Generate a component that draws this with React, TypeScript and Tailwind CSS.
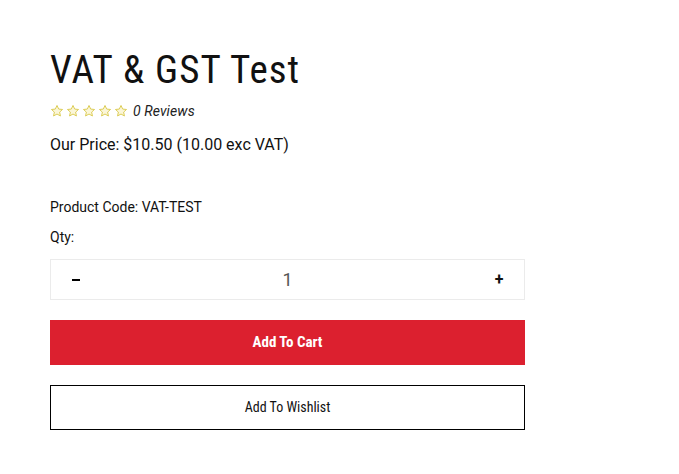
import { useState } from 'react';

function Star() {
  return (
    <svg width="14" height="14" viewBox="0 0 24 24" fill="none" stroke="#d9c94c" strokeWidth="1.6" strokeLinejoin="round">
      <path d="M12 2.5l2.9 6.2 6.6.7-5 4.5 1.4 6.6L12 17.2l-5.9 3.3 1.4-6.6-5-4.5 6.6-.7z" fill="#fbf6d8" />
    </svg>
  );
}

export default function App() {
  const [qty, setQty] = useState(1);

  return (
    <div className="min-h-[474px] bg-white text-[#111] font-['Roboto','Liberation_Sans',sans-serif]">
      <div className="w-[475px] pl-[50px] pt-[47px] box-content">
        <h1 className="text-[39px] leading-[46px] font-normal text-[#111] tracking-[1px] [font-stretch:condensed]">
          VAT &amp; GST Test
        </h1>
        <div className="flex items-center mt-[8px] h-[20px]">
          <div className="flex gap-[2px]">
            <Star />
            <Star />
            <Star />
            <Star />
            <Star />
          </div>
          <span className="ml-[5px] text-[14px] italic text-[#222] tracking-[0.1px]">0 Reviews</span>
        </div>
        <p className="mt-[14px] text-[16px] leading-[20px] text-[#111]">
          Our Price: $10.50 (10.00 exc VAT)
        </p>
        <p className="mt-[43px] text-[14px] leading-[18px] text-[#111]">Product Code: VAT-TEST</p>
        <p className="mt-[12px] text-[14px] leading-[18px] text-[#111]">Qty:</p>
        <div className="mt-[13px] flex items-center h-[41px] border border-[#ebebeb]">
          <button
            onClick={() => setQty(q => Math.max(1, q - 1))}
            className="w-[50px] h-full flex items-center justify-center"
            aria-label="decrease"
          >
            <span className="block w-[8px] h-[2px] bg-black" />
          </button>
          <div className="flex-1 text-center text-[18px] leading-[20px] text-[#555]">{qty}</div>
          <button
            onClick={() => setQty(q => q + 1)}
            className="w-[50px] h-full flex items-center justify-center text-[16px] font-bold"
          >
            +
          </button>
        </div>
        <button className="mt-[20px] w-full h-[45px] bg-[#dc202f] text-white text-[15px] font-bold [font-stretch:condensed]">
          Add To Cart
        </button>
        <button className="mt-[20px] w-full h-[45px] border border-black bg-white text-[14px] text-[#111] [font-stretch:condensed]">
          Add To Wishlist
        </button>
      </div>
    </div>
  );
}
